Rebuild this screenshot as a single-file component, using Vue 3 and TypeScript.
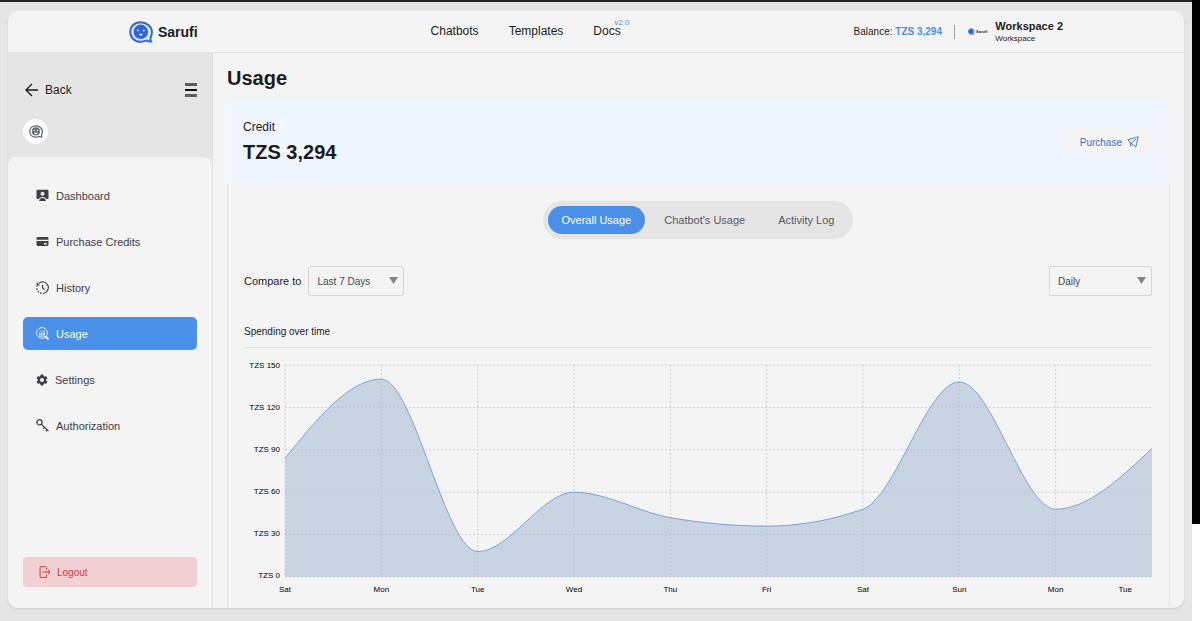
<script setup lang="ts">
import { computed, ref } from 'vue'

interface Point {
  label: string
  value: number
}

const tabs = ['Overall Usage', "Chatbot's Usage", 'Activity Log']
const activeTab = ref(tabs[0])
const range = ref('Last 7 Days')
const interval = ref('Daily')

const series: Point[] = [
  { label: 'Sat', value: 84 },
  { label: 'Mon', value: 140 },
  { label: 'Tue', value: 18 },
  { label: 'Wed', value: 60 },
  { label: 'Thu', value: 42 },
  { label: 'Fri', value: 36 },
  { label: 'Sat', value: 48 },
  { label: 'Sun', value: 138 },
  { label: 'Mon', value: 48 },
  { label: 'Tue', value: 91 },
]
const ticks = [150, 120, 90, 60, 30, 0]
const step = 100

// Monotone cubic interpolation through the series
const linePath = computed(() => {
  const y = series.map((p) => 150 - p.value)
  const n = y.length
  const slope = y.slice(1).map((v, i) => (v - y[i]) / step)
  const t: number[] = new Array(n).fill(0)
  for (let i = 1; i < n - 1; i++) {
    const a = slope[i - 1]
    const b = slope[i]
    t[i] = (Math.sign(a) + Math.sign(b)) * Math.min(Math.abs(a), Math.abs(b), Math.abs(a + b) / 4)
  }
  t[0] = (3 * slope[0] - t[1]) / 2
  t[n - 1] = (3 * slope[n - 2] - t[n - 2]) / 2
  let d = `M0,${y[0]}`
  for (let i = 0; i < n - 1; i++) {
    const x = i * step
    const h = step / 3
    d += `C${x + h},${y[i] + t[i] * h} ${x + step - h},${y[i + 1] - t[i + 1] * h} ${x + step},${y[i + 1]}`
  }
  return d
})
const areaPath = computed(() => `${linePath.value}L900,150L0,150Z`)
</script>

<template>
  <div class="screen">
    <div class="page">
      <div class="panel">
        <header class="topbar">
          <a href="#" class="brand">
            <svg class="brand-icon" viewBox="0 0 24 22">
              <path d="M11.500 1.300C5.500 1.300 1.300 5.500 1.300 11c0 5.500 4.200 9.700 10.200 9.700 2.500 0 4.300-.5 5.800-1.300 1.400.9 2.700 1.200 4.700 1-.6-1-.7-2.300-.4-3.900.9-1.500 1.300-3.400 1.300-5.500 0-5.500-5.400-9.700-11.400-9.700Z" fill="#dfe9fb" stroke="#2f66d8" stroke-width="2" />
              <circle cx="11.800" cy="10.800" r="7.300" fill="#2f66d8" />
              <circle cx="8.800" cy="9.400" r=".9" fill="#dfe9fb" />
              <circle cx="14.800" cy="9.400" r=".9" fill="#dfe9fb" />
              <path d="M10 12.800h3.600c-.2 1.300-.9 1.800-1.800 1.800s-1.600-.5-1.800-1.800Z" fill="#dfe9fb" />
            </svg>
            <span>Sarufi</span>
          </a>
          <nav class="links">
            <a href="#">Chatbots</a>
            <a href="#">Templates</a>
            <a href="#" class="docs">Docs<span class="version">v2.0</span></a>
          </nav>
          <div class="account">
            <div class="balance">Balance: <strong>TZS 3,294</strong></div>
            <span class="divider"></span>
            <div class="workspace">
              <div class="mini">
                <svg viewBox="0 0 8 8"><path d="M4 0a3.500 3.500 0 1 0 1.500 6.800L7.500 7 7 5.500A3.500 3.500 0 0 0 4 0Z" fill="#7fa3f0" /><circle cx="3.800" cy="3.600" r="2.400" fill="#2f66d8" /></svg>
                <span>Sarufi</span>
              </div>
              <div>
                <div class="ws-name">Workspace 2</div>
                <div class="ws-kind">Workspace</div>
              </div>
            </div>
          </div>
        </header>

        <div class="body">
          <aside class="sidebar">
            <div class="side-top">
              <div class="back-row">
                <a href="#" class="back">
                  <svg viewBox="0 0 14 14"><path d="M13 7H1.500M7 1 1 7l6 6" fill="none" stroke="#1c1c1e" stroke-width="1.400" /></svg>
                  <span>Back</span>
                </a>
                <button class="burger" aria-label="Toggle menu">
                  <svg viewBox="0 0 12 14"><path d="M0 0h12v3H0zM0 11h12v3H0z" fill="#5c5c5c" /><path d="M0 6h12v2H0z" fill="#111" /></svg>
                </button>
              </div>
              <div class="avatar">
                <svg viewBox="0 0 24 22">
                  <path d="M11.500 1.300C5.500 1.300 1.300 5.500 1.300 11c0 5.500 4.200 9.700 10.200 9.700 2.500 0 4.300-.5 5.800-1.300 1.400.9 2.700 1.200 4.700 1-.6-1-.7-2.300-.4-3.900.9-1.500 1.300-3.400 1.300-5.500 0-5.500-5.400-9.700-11.400-9.700Z" fill="#fff" stroke="#55585e" stroke-width="2" />
                  <circle cx="11.800" cy="10.800" r="7" fill="#6a6d73" />
                  <circle cx="8.800" cy="9.300" r="1.200" fill="#fff" />
                  <circle cx="14.600" cy="9.300" r="1.200" fill="#fff" />
                  <path d="M8.700 13h6.200c-.3 1.800-1.600 2.600-3.100 2.600S9 14.800 8.700 13Z" fill="#fff" />
                </svg>
              </div>
            </div>

            <div class="side-main">
              <nav class="menu">
                <a href="#" class="item">
                  <svg class="ico" viewBox="0 0 13 13">
                    <path d="M1.700.7h9.600c.7 0 1.200.5 1.200 1.200v7c0 .7-.5 1.200-1.200 1.200h-.9C9.700 8.700 8.300 8 6.500 8S3.300 8.700 2.600 10.100h-.9C1 10.100.5 9.600.5 8.900v-7C.5 1.200 1 .7 1.700.7Z" fill="#3e4045" />
                    <circle cx="6.500" cy="4.800" r="2" fill="#f4f4f4" />
                    <path d="M3.200 11.200C3.700 9.700 5 9 6.500 9s2.800.7 3.300 2.200c.1.500-.1.900-.6.900H3.800c-.5 0-.7-.4-.6-.9Z" fill="#3e4045" />
                  </svg>
                  <span>Dashboard</span>
                </a>
                <a href="#" class="item">
                  <svg class="ico" viewBox="0 0 13 13">
                    <path d="M.5 4.800V3.400C.5 2.600 1 2 1.900 2h9.200c.9 0 1.400.6 1.400 1.400v1.400ZM.5 6h12v3.600c0 .8-.5 1.400-1.400 1.400H1.900C1 11 .5 10.400.5 9.600Z" fill="#3e4045" />
                    <path d="M8 8h2.800v1.400H8z" fill="#f4f4f4" />
                  </svg>
                  <span>Purchase Credits</span>
                </a>
                <a href="#" class="item">
                  <svg class="ico" viewBox="0 0 13 13" fill="none" stroke="#3e4045">
                    <path d="M2.800 2.400A5.700 5.700 0 1 1 8.500 12" stroke-width="1.200" />
                    <path d="M8.500 12A5.700 5.700 0 0 1 1 5" stroke-width="1.300" stroke-dasharray="1.500 1.400" />
                    <path d="M.6 1v3.500h3.500Z" fill="#3e4045" stroke="none" />
                    <path d="M6.500 3.700v3l2 2" stroke-width="1.200" />
                  </svg>
                  <span>History</span>
                </a>
                <a href="#" class="item active" aria-current="page">
                  <svg class="ico" viewBox="0 0 13 13" fill="none" stroke="#fff">
                    <circle cx="6" cy="6" r="5.400" stroke-width=".8" />
                    <path d="M3.800 8.200V6M5.400 8.200V5.300M7 8.200V5.700M8.500 8.200V4.300M3 9.100h6.200" stroke-width=".9" />
                    <path d="m3.400 4.800 2-1.200 1.500.8 1.700-1.500" stroke-width=".6" />
                    <path d="m9.500 9.500 3 3" stroke-width="1.800" />
                  </svg>
                  <span>Usage</span>
                </a>
                <a href="#" class="item">
                  <svg class="ico gear" viewBox="0 0 12 12">
                    <g fill="#3e4045">
                      <path v-for="a in [0, 60, 120]" :key="a" d="M4.500.5h3v11h-3z" :transform="`rotate(${a} 6 6)`" />
                      <circle cx="6" cy="6" r="4.200" />
                    </g>
                    <circle cx="6" cy="6" r="2" fill="#f4f4f4" />
                  </svg>
                  <span>Settings</span>
                </a>
                <a href="#" class="item">
                  <svg class="ico" viewBox="0 0 13 13" fill="none" stroke="#3e4045" stroke-width="1.300">
                    <circle cx="3.500" cy="3.300" r="2.600" />
                    <path d="m5.300 5.100 7.200 7M8.700 8.400 7.200 9.900M11.200 10.800l-1.400 1.500" />
                  </svg>
                  <span>Authorization</span>
                </a>
              </nav>
              <button class="logout">
                <svg viewBox="0 0 12 12" fill="none" stroke="#d7373f" stroke-width="1">
                  <path d="M7.500 3.300V1.800L6.200.6H1.100v10.800h6.400V8.600M3.500 6h7.300M8.800 3.900 11 6 8.800 8.100" />
                </svg>
                <span>Logout</span>
              </button>
            </div>
          </aside>

          <main class="main">
            <h1>Usage</h1>
            <section class="credit">
              <div>
                <div class="credit-label">Credit</div>
                <div class="credit-amount">TZS 3,294</div>
              </div>
              <button class="purchase">
                <span>Purchase</span>
                <svg viewBox="0 0 12 12" fill="none" stroke="#3a6fd8" stroke-width=".9" stroke-linejoin="round">
                  <path d="M11.200.8.800 3.700l2.400 2.700.3 3.400 1.800-1.500 3.600 2.500ZM9 3 4 7.500M3.200 6.400l2.100 1.900" />
                </svg>
              </button>
            </section>

            <section class="report">
              <div class="tabs" role="tablist">
                <button
                  v-for="tab in tabs"
                  :key="tab"
                  role="tab"
                  :aria-selected="tab === activeTab"
                  :class="['tab', { on: tab === activeTab }]"
                  @click="activeTab = tab"
                >{{ tab }}</button>
              </div>

              <div class="filters">
                <div class="compare">
                  <label for="range">Compare to</label>
                  <div class="select narrow">
                    <select id="range" v-model="range">
                      <option>Last 7 Days</option>
                      <option>Last 30 Days</option>
                    </select>
                    <svg viewBox="0 0 9 7"><path d="M0 0h9L4.500 7Z" fill="#858585" /></svg>
                  </div>
                </div>
                <div class="select wide">
                  <select v-model="interval" aria-label="Interval">
                    <option>Daily</option>
                    <option>Weekly</option>
                  </select>
                  <svg viewBox="0 0 9 7"><path d="M0 0h9L4.500 7Z" fill="#858585" /></svg>
                </div>
              </div>

              <h2>Spending over time</h2>

              <div class="chart">
                <div class="y-axis">
                  <span v-for="t in ticks" :key="t">TZS {{ t }}</span>
                </div>
                <svg class="plot" viewBox="0 0 900 150" preserveAspectRatio="none">
                  <g class="grid">
                    <path v-for="t in ticks" :key="'h' + t" :d="`M0 ${t}H900`" />
                    <path v-for="(p, i) in series.slice(0, -1)" :key="'v' + i" :d="`M${i * step} 0V150`" />
                  </g>
                  <path class="area" :d="areaPath" />
                  <path class="line" :d="linePath" />
                </svg>
                <div class="x-axis">
                  <span v-for="(p, i) in series" :key="i"><b>{{ p.label }}</b></span>
                </div>
              </div>
            </section>
          </main>
        </div>
      </div>
    </div>
    <div class="edge"><div class="edge-dark"></div></div>
  </div>
</template>

<style>
body {
  margin: 0;
}
</style>

<style scoped>
* {
  box-sizing: border-box;
}
.screen {
  display: flex;
  min-height: 100vh;
  font-family: "Liberation Sans", Arial, sans-serif;
  font-size: 11px;
  color: #1c1c1e;
  background: #e5e5e5;
}
a {
  color: inherit;
  text-decoration: none;
}
button,
select {
  font: inherit;
  color: inherit;
  border: 0;
  padding: 0;
  background: none;
}
svg {
  display: block;
  flex: none;
}
.page {
  flex: 1;
  display: flex;
  border-top: 2px solid #22262b;
  padding: 9px 8px 13px;
}
.edge {
  width: 8px;
  background: #fff;
}
.edge-dark {
  height: 84.3%;
  background: #000;
}
.panel {
  flex: 1;
  display: flex;
  flex-direction: column;
  background: #f4f4f4;
  border-radius: 10px;
  overflow: hidden;
  box-shadow: 0 1px 2px rgba(0, 0, 0, 0.12);
}
.topbar {
  display: flex;
  align-items: center;
  justify-content: space-between;
  height: 42px;
  padding: 0 121px;
  border-bottom: 1px solid #e0e0e0;
}
.brand {
  display: flex;
  align-items: center;
  gap: 5px;
  font-size: 14px;
  font-weight: 700;
}
.brand-icon {
  width: 24px;
  height: 22px;
}
.links {
  display: flex;
  gap: 30px;
  padding-bottom: 2px;
  font-size: 12px;
}
.docs {
  position: relative;
}
.version {
  position: absolute;
  left: 21px;
  top: -7px;
  font-size: 8px;
  line-height: 12px;
  color: #4a90e8;
}
.account {
  display: flex;
  align-items: center;
  gap: 12px;
  font-size: 10px;
}
.balance strong {
  color: #4a90e8;
}
.divider {
  width: 1px;
  height: 14px;
  background: #a8a8a8;
}
.workspace {
  display: flex;
  align-items: center;
  gap: 8px;
}
.mini {
  display: flex;
  align-items: center;
  gap: 1px;
  font-size: 4px;
  font-weight: 700;
}
.mini svg {
  width: 8px;
  height: 8px;
}
.ws-name {
  font-size: 11px;
  line-height: 14px;
  font-weight: 700;
}
.ws-kind {
  font-size: 8px;
  line-height: 12px;
}
.body {
  flex: 1;
  display: flex;
}
.sidebar {
  width: 205px;
  display: flex;
  flex-direction: column;
  background: #e5e5e5;
  border-right: 1px solid #e0e0e0;
}
.side-top {
  padding: 28px 15px 13px;
}
.back-row {
  display: flex;
  align-items: center;
  justify-content: space-between;
  height: 18px;
  padding-left: 2px;
  margin-bottom: 20px;
}
.back {
  display: flex;
  align-items: center;
  gap: 6px;
  font-size: 12px;
}
.back svg {
  width: 14px;
  height: 14px;
}
.burger svg {
  width: 12px;
  height: 14px;
}
.avatar {
  display: flex;
  align-items: center;
  justify-content: center;
  width: 25px;
  height: 25px;
  border-radius: 50%;
  background: #fff;
}
.avatar svg {
  width: 14px;
  height: 13px;
}
.side-main {
  flex: 1;
  display: flex;
  flex-direction: column;
  justify-content: space-between;
  padding: 22px 15px 21px;
  background: #f4f4f4;
  border-radius: 8px 8px 0 0;
}
.menu {
  display: flex;
  flex-direction: column;
  gap: 13px;
}
.item {
  display: flex;
  align-items: center;
  gap: 7px;
  height: 33px;
  padding-left: 13px;
  border-radius: 5px;
  color: #3e4045;
}
.item.active {
  background: #4a90e8;
  color: #fff;
}
.ico {
  width: 13px;
  height: 13px;
}
.ico.gear {
  width: 12px;
  height: 12px;
}
.logout {
  display: flex;
  align-items: center;
  gap: 6px;
  height: 30px;
  padding-left: 16px;
  border-radius: 4px;
  background: #f0d0d2;
  color: #d7373f;
  font-size: 10px;
}
.logout svg {
  width: 12px;
  height: 12px;
}
.main {
  flex: 1;
  display: flex;
  flex-direction: column;
  min-width: 0;
  padding: 11px 14px 0;
}
h1 {
  margin: 0 0 8px;
  font-size: 20px;
  line-height: 28px;
}
.credit {
  display: flex;
  align-items: center;
  justify-content: space-between;
  padding: 18px 17px 18px 16px;
  border-radius: 10px 10px 0 0;
  background: #eff6ff;
}
.credit-label {
  font-size: 12px;
  line-height: 18px;
  margin-bottom: 2px;
}
.credit-amount {
  font-size: 20px;
  line-height: 28px;
  font-weight: 700;
}
.purchase {
  display: flex;
  align-items: center;
  gap: 5px;
  height: 24px;
  padding: 0 14px;
  border-radius: 4px;
  background: #f4f4f4;
  color: #3a6fd8;
  font-size: 10px;
}
.purchase svg {
  width: 12px;
  height: 12px;
}
.report {
  flex: 1;
  display: flex;
  flex-direction: column;
  padding: 17px 17px 12px 16px;
  border: solid #e2e2e2;
  border-width: 0 1px;
}
.tabs {
  display: flex;
  align-self: center;
  gap: 5px;
  padding: 5px;
  border-radius: 19px;
  background: #e5e5e5;
}
.tab {
  height: 28px;
  padding: 0 14px;
  border-radius: 14px;
  color: #55585e;
}
.tab.on {
  background: #4a90e8;
  color: #fff;
}
.filters {
  display: flex;
  justify-content: space-between;
  margin-top: 27px;
}
.compare {
  display: flex;
  align-items: center;
  gap: 7px;
}
.select {
  position: relative;
  height: 30px;
}
.select.narrow {
  width: 96px;
}
.select.wide {
  width: 103px;
}
.select select {
  appearance: none;
  width: 100%;
  height: 100%;
  padding: 0 8px;
  border: 1px solid #d6d6d6;
  border-radius: 2px;
  font-size: 10px;
  color: #45474c;
}
.select svg {
  position: absolute;
  right: 6px;
  top: 11px;
  width: 9px;
  height: 7px;
  pointer-events: none;
}
h2 {
  margin: 28px 0 17px;
  padding-bottom: 7px;
  border-bottom: 1px solid #e2e4e8;
  font-size: 10px;
  line-height: 16px;
  font-weight: 400;
}
.chart {
  display: grid;
  grid-template-columns: 41px 1fr;
  grid-template-rows: 212px 12px;
  row-gap: 7px;
  font-size: 8px;
  color: #000;
}
.y-axis {
  display: flex;
  flex-direction: column;
  justify-content: space-between;
  padding: 0 5px 2px 0;
  text-align: right;
}
.y-axis span {
  display: flex;
  align-items: center;
  justify-content: flex-end;
  height: 0;
}
.plot {
  width: 100%;
  height: 100%;
  overflow: visible;
}
.plot path {
  vector-effect: non-scaling-stroke;
}
.grid path {
  stroke: #cfcfcf;
  stroke-width: 1px;
  stroke-dasharray: 2 2;
}
.area {
  fill: #acbdd6;
  fill-opacity: 0.6;
}
.line {
  fill: none;
  stroke: #7aa2de;
  stroke-width: 1px;
}
.x-axis {
  grid-column: 2;
  display: flex;
  justify-content: space-between;
  line-height: 12px;
}
.x-axis span {
  display: flex;
  justify-content: center;
  width: 0;
}
.x-axis b {
  font-weight: 400;
}
.x-axis span:last-child {
  justify-content: flex-end;
}
.x-axis span:last-child b {
  margin-right: 20px;
}
</style>
